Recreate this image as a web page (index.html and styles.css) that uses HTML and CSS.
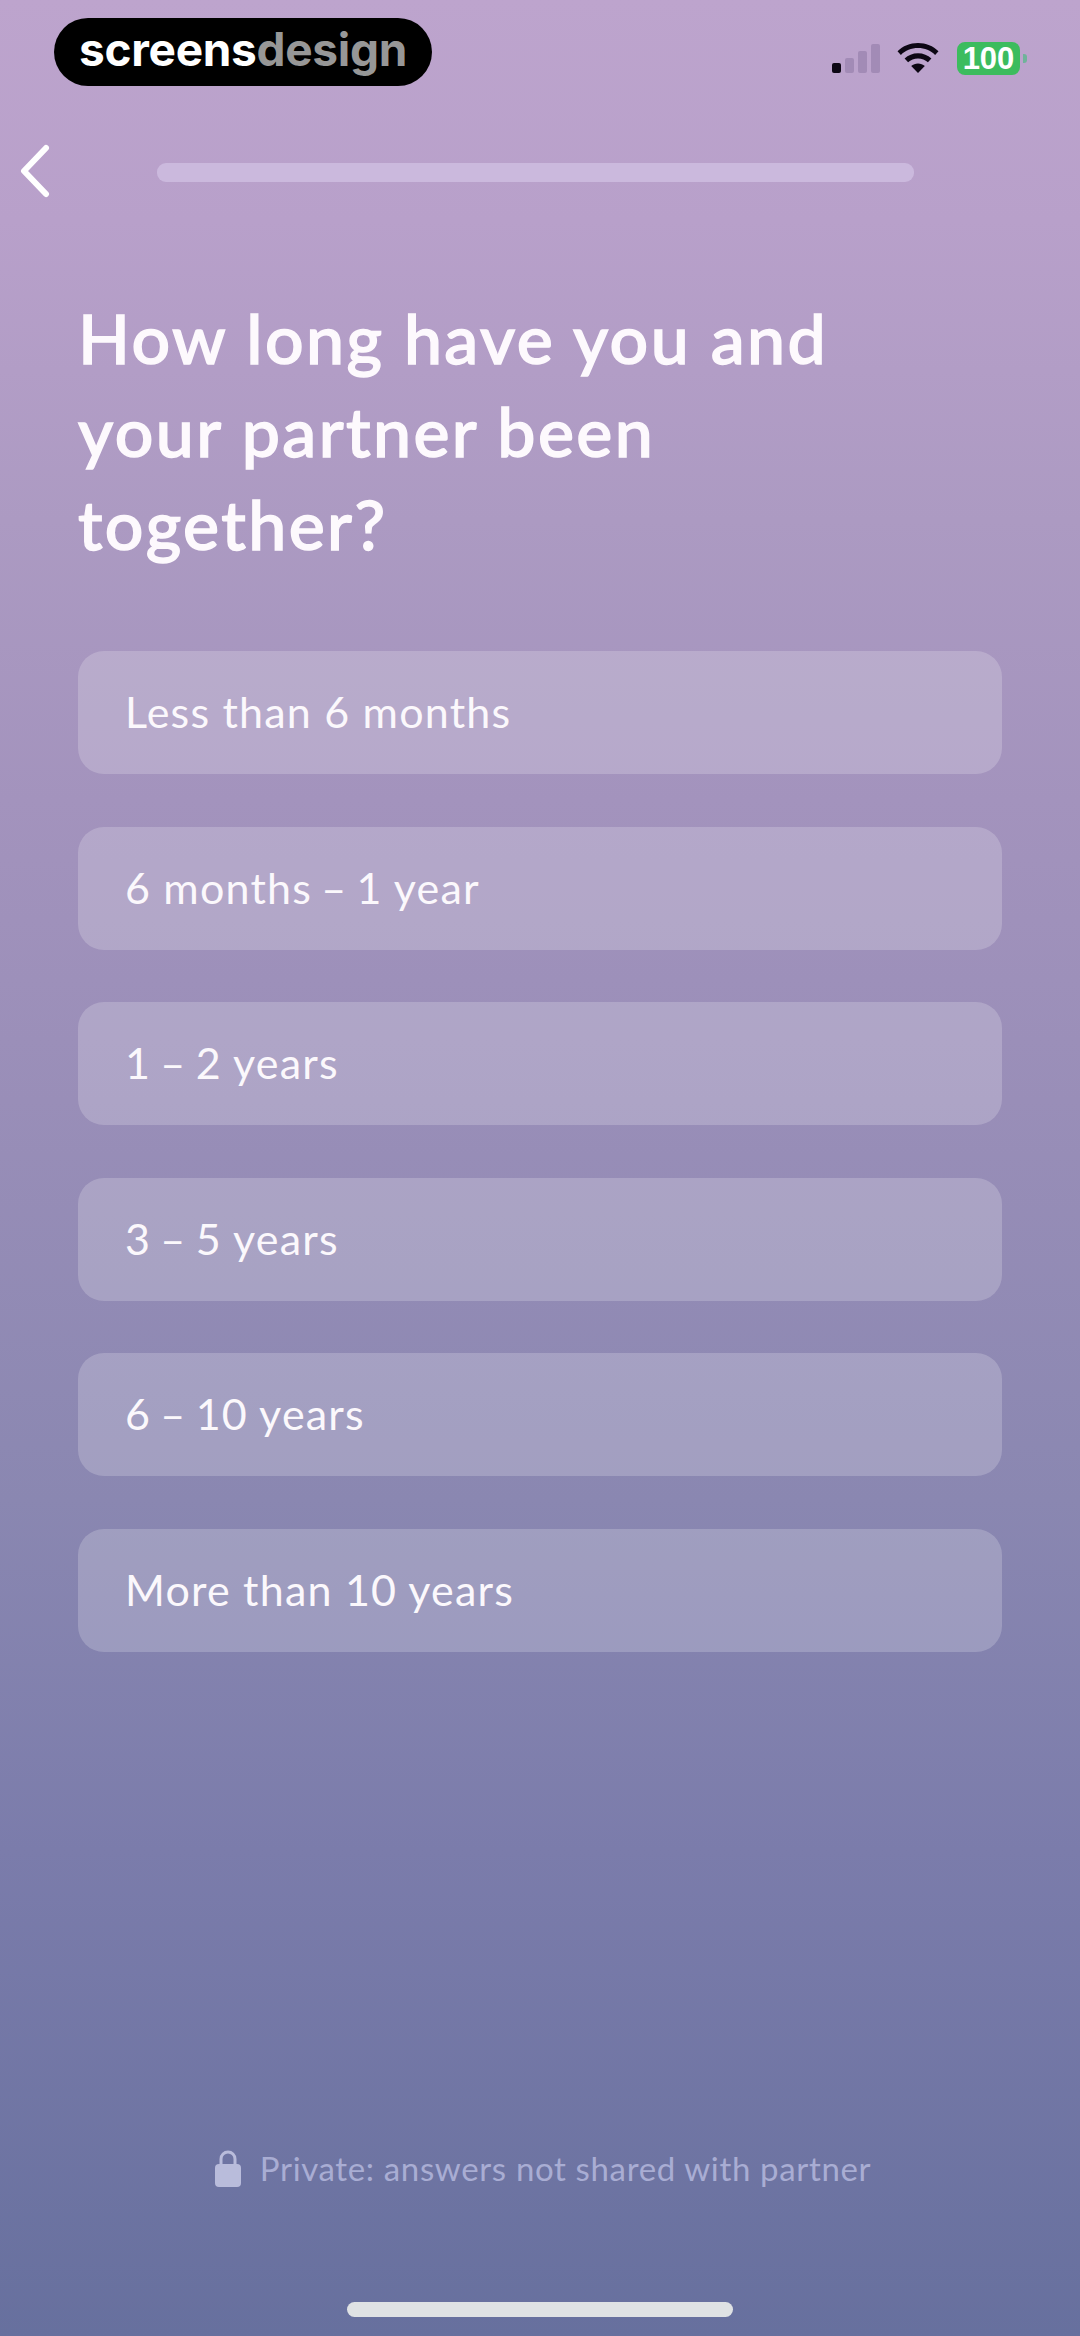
FILE: index.html
```html
<!DOCTYPE html>
<html lang="en">
  <head>
    <meta charset="UTF-8" />
    <meta name="viewport" content="width=device-width, initial-scale=1.0" />
    <title>How long have you been together</title>
    <link rel="stylesheet" href="styles.css">
  </head>
  <body>
    <div class="screen">
      <div class="status-bar">
        <div class="brand"><span class="brand-white">screens</span><span class="brand-grey">design</span></div>
        <div class="status-icons">
          <div class="signal">
            <span class="bar bar-1 on"></span>
            <span class="bar bar-2"></span>
            <span class="bar bar-3"></span>
            <span class="bar bar-4"></span>
          </div>
          <svg class="wifi" viewBox="0 0 42 30" width="42" height="30">
            <path d="M21 0C13 0 5.800 3.100.5 8.200l3.400 3.700C8.300 7.700 14.300 5.100 21 5.100s12.700 2.600 17.100 6.800l3.400-3.700C36.200 3.100 29 0 21 0z" />
            <path d="M21 10.200c-5.200 0-9.900 2-13.400 5.300l3.500 3.800c2.600-2.400 6.100-3.900 9.900-3.900s7.300 1.500 9.900 3.900l3.500-3.800c-3.500-3.300-8.200-5.300-13.400-5.300z" />
            <path d="M21 20.400c-2.600 0-5 1-6.800 2.700L21 30l6.800-6.900c-1.800-1.700-4.200-2.700-6.800-2.700z" />
          </svg>
          <div class="battery">100</div>
          <span class="battery-nub"></span>
        </div>
      </div>

      <div class="nav-row">
        <svg class="back" viewBox="0 0 32 54" width="32" height="54">
          <path d="M27 4 5 27l22 23" />
        </svg>
        <div class="progress"></div>
      </div>

      <h1 class="question">How long have you and your partner been together?</h1>

      <div class="options">
        <div class="option">Less than 6 months</div>
        <div class="option"><span>6 months <span class="dash">–</span> 1 year</span></div>
        <div class="option"><span>1 <span class="dash">–</span> 2 years</span></div>
        <div class="option"><span>3 <span class="dash">–</span> 5 years</span></div>
        <div class="option"><span>6 <span class="dash">–</span> 10 years</span></div>
        <div class="option">More than 10 years</div>
      </div>

      <div class="private-note">
        <svg class="lock" viewBox="0 0 26 37" width="26" height="37">
          <path class="shackle" d="M6 17V9a7 7 0 0 1 14 0v8" />
          <rect y="14" width="26" height="23" rx="4" />
        </svg>
        <span>Private: answers not shared with partner</span>
      </div>

      <div class="home-bar"></div>
    </div>
  </body>
</html>
```

FILE: styles.css
```css
html,
body {
  margin: 0;
  padding: 0;
}
body {
  font-family: Lato, "Open Sans", Arial, sans-serif;
  color: #fff;
}
.screen {
  width: 1080px;
  height: 2336px;
  overflow: hidden;
  display: flex;
  flex-direction: column;
  background: linear-gradient(
    180deg,
    #bda4cd 0,
    #b8a0ca 220px,
    #ac9ac2 520px,
    #a393bd 800px,
    #998eb8 1100px,
    #8a87b1 1500px,
    #7b7cab 1850px,
    #67709e 2336px
  );
}

/* status bar */
.status-bar {
  display: flex;
  justify-content: space-between;
  align-items: flex-start;
  padding: 18px 53px 0 54px;
  height: 68px;
}
.brand {
  width: 378px;
  height: 68px;
  box-sizing: border-box;
  padding: 0 0 6px 25px;
  display: flex;
  align-items: center;
  background: #000;
  border-radius: 34px;
  font-family: Inter, Arial, sans-serif;
  font-weight: 700;
  font-size: 46px;
  letter-spacing: -0.3px;
}
.brand-grey {
  color: #979797;
}
.status-icons {
  display: flex;
  align-items: flex-end;
  height: 57px;
}
.signal {
  display: flex;
  align-items: flex-end;
  gap: 4px;
  margin-bottom: 2px;
}
.bar {
  width: 9px;
  border-radius: 2px;
  background: #a28bb6;
}
.bar.on {
  background: #0d0714;
}
.bar-1 {
  height: 10px;
}
.bar-2 {
  height: 15px;
}
.bar-3 {
  height: 22px;
}
.bar-4 {
  height: 29px;
}
.wifi {
  margin: 0 18px 2px 17px;
  fill: #0d0714;
}
.battery {
  width: 63px;
  height: 33px;
  border-radius: 8px;
  background: #3cbc5e;
  font-family: "Liberation Sans", Arial, sans-serif;
  font-weight: 700;
  font-size: 31px;
  line-height: 33px;
  text-align: center;
}
.battery-nub {
  width: 4px;
  height: 9px;
  margin: 0 0 12px 3px;
  border-radius: 0 3px 3px 0;
  background: #6fb39a;
}

/* back arrow and progress */
.nav-row {
  display: flex;
  align-items: center;
  height: 54px;
  margin-top: 58px;
  padding-left: 19px;
}
.back {
  fill: none;
  stroke: #fff;
  stroke-width: 6;
  stroke-linecap: round;
  stroke-linejoin: round;
}
.progress {
  width: 757px;
  height: 19px;
  margin-left: 106px;
  margin-top: 2px;
  border-radius: 9px;
  background: #cbb9dd;
}

/* question */
.question {
  width: 800px;
  margin: 93px 0 0 78px;
  font-size: 68px;
  font-weight: 500;
  letter-spacing: 2.4px;
  line-height: 93px;
  color: #fdf9fd;
  -webkit-text-stroke: 1.4px #fdf9fd;
}

/* answers */
.options {
  display: flex;
  flex-direction: column;
  gap: 52.6px;
  margin: 81px 78px 0;
}
.option {
  height: 123px;
  box-sizing: border-box;
  padding: 0 0 2px 47px;
  display: flex;
  align-items: center;
  background: rgba(255, 255, 255, 0.2);
  border-radius: 26px;
  font-size: 43px;
  letter-spacing: 1.2px;
  color: #fbf8fc;
}
.dash {
  margin: 0 -3px;
}

/* footer */
.private-note {
  display: flex;
  align-items: center;
  justify-content: center;
  gap: 19px;
  margin-top: auto;
  padding-left: 6px;
  font-size: 33px;
  letter-spacing: 0.65px;
  color: #a9add3;
}
.lock {
  fill: #b9bcdb;
}
.lock .shackle {
  fill: none;
  stroke: #b9bcdb;
  stroke-width: 3;
}
.home-bar {
  width: 386px;
  height: 15px;
  margin: 114px auto 19px;
  border-radius: 8px;
  background: #dfe2e4;
}
```
